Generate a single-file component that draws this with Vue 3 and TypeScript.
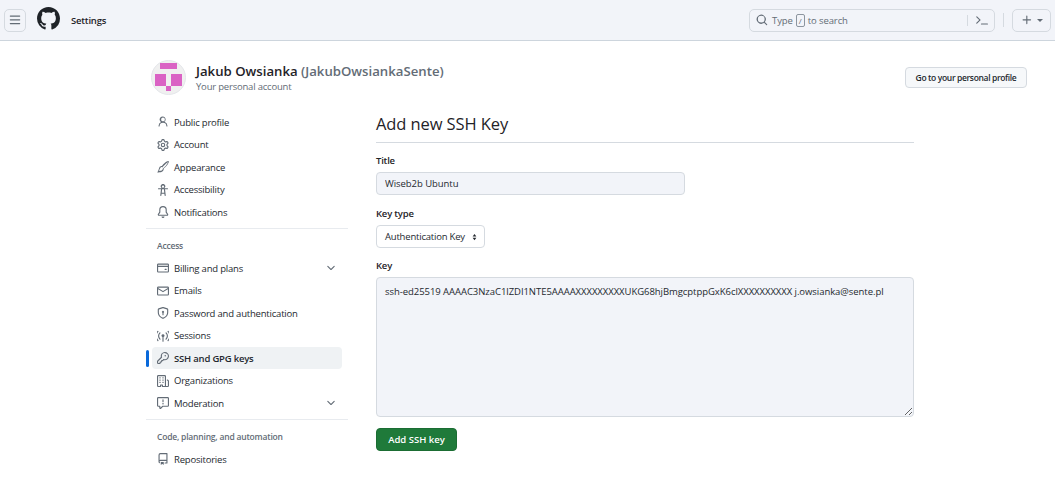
<template>
  <div class="page">
    <header class="topbar">
      <button type="button" class="icon-btn menu-btn" aria-label="Menu">
        <svg viewBox="0 0 16 16" class="icon"><path :d="icons.bars" /></svg>
      </button>
      <svg viewBox="0 0 16 16" class="logo"><path :d="icons.github" /></svg>
      <span class="context">Settings</span>
      <div class="search">
        <svg viewBox="0 0 16 16" class="icon search-icon"><path :d="icons.search" /></svg>
        <span>Type</span><kbd>/</kbd><span>to search</span>
        <span class="search-sep"></span>
        <svg viewBox="0 0 16 16" class="icon palette"><path :d="icons.palette" /></svg>
      </div>
      <span class="top-sep"></span>
      <button type="button" class="icon-btn plus-btn" aria-label="Create new">
        <svg viewBox="0 0 16 16" class="icon"><path :d="icons.plus" /></svg>
        <span class="caret"></span>
      </button>
    </header>

    <div class="content">
      <div class="account">
        <svg viewBox="0 0 35 35" class="avatar">
          <circle cx="17.5" cy="17.5" r="17" fill="#f0f0f0" stroke="#e4e6ea" />
          <rect x="9" y="3" width="17" height="6" fill="#da62c4" />
          <rect x="4" y="14" width="11" height="12" fill="#da62c4" />
          <rect x="20" y="14" width="11" height="12" fill="#da62c4" />
          <rect x="15" y="26" width="5" height="5" fill="#da62c4" />
        </svg>
        <div class="account-text">
          <div class="account-name">Jakub Owsianka <span>(JakubOwsiankaSente)</span></div>
          <div class="account-sub">Your personal account</div>
        </div>
        <button type="button" class="profile-btn">Go to your personal profile</button>
      </div>

      <div class="columns">
        <nav class="sidebar">
          <template v-for="group in nav" :key="group.title">
            <div v-if="group.title !== 'top'" class="nav-heading">{{ group.title }}</div>
            <a
              v-for="item in group.items"
              :key="item.label"
              class="nav-item"
              :class="{ 'nav-item--active': item.active }"
            >
              <svg viewBox="0 0 16 16" class="nav-icon"><path :d="item.icon" /></svg>
              <span class="nav-label">{{ item.label }}</span>
              <svg v-if="item.expand" viewBox="0 0 16 16" class="nav-chevron"><path :d="icons.chevron" /></svg>
            </a>
            <div v-if="group.divider" class="nav-divider"></div>
          </template>
        </nav>

        <main class="main">
          <h1>Add new SSH Key</h1>
          <label class="field-label">Title</label>
          <input class="title-input" type="text" value="Wiseb2b Ubuntu" />
          <label class="field-label">Key type</label>
          <div class="select">
            <span>Authentication Key</span>
            <svg viewBox="0 0 8 12" class="select-arrows"><path d="M4 1 7 5H1ZM4 11 1 7h6Z" /></svg>
          </div>
          <label class="field-label">Key</label>
          <textarea class="key-input">ssh-ed25519 AAAAC3NzaC1lZDI1NTE5AAAAXXXXXXXXXUKG68hjBmgcptppGxK6clXXXXXXXXXX j.owsianka@sente.pl</textarea>
          <button type="button" class="submit-btn">Add SSH key</button>
        </main>
      </div>
    </div>
  </div>
</template>

<script setup lang="ts">
const icons = {
  bars: 'M1 2.75A.75.75 0 0 1 1.75 2h12.5a.75.75 0 0 1 0 1.5H1.75A.75.75 0 0 1 1 2.75Zm0 5A.75.75 0 0 1 1.75 7h12.5a.75.75 0 0 1 0 1.5H1.75A.75.75 0 0 1 1 7.75ZM1.75 12h12.5a.75.75 0 0 1 0 1.5H1.75a.75.75 0 0 1 0-1.5Z',
  github: 'M8 0c4.42 0 8 3.58 8 8a8.013 8.013 0 0 1-5.45 7.59c-.4.08-.55-.17-.55-.38 0-.27.01-1.13.01-2.2 0-.75-.25-1.23-.54-1.48 1.78-.2 3.65-.88 3.65-3.95 0-.88-.31-1.59-.82-2.15.08-.2.36-1.02-.08-2.12 0 0-.67-.22-2.2.82-.64-.18-1.32-.27-2-.27-.68 0-1.36.09-2 .27-1.53-1.03-2.2-.82-2.2-.82-.44 1.1-.16 1.92-.08 2.12-.51.56-.82 1.28-.82 2.15 0 3.06 1.86 3.75 3.64 3.95-.23.2-.44.55-.51 1.07-.46.21-1.61.55-2.33-.66-.15-.24-.6-.83-1.23-.82-.67.01-.27.38.01.53.34.19.73.9.82 1.13.16.45.68 1.31 2.69.94 0 .67.01 1.3.01 1.49 0 .21-.15.45-.55.38A7.995 7.995 0 0 1 0 8c0-4.42 3.58-8 8-8Z',
  search: 'M10.68 11.74a6 6 0 0 1-7.922-8.982 6 6 0 0 1 8.982 7.922l3.04 3.04a.749.749 0 0 1-.326 1.275.749.749 0 0 1-.734-.215ZM11.5 7a4.499 4.499 0 1 0-8.997 0A4.499 4.499 0 0 0 11.5 7Z',
  palette: 'M6.354 8.04 1.581 12.813a.75.75 0 1 1-1.061-1.06L4.232 8.04.52 4.327a.75.75 0 1 1 1.06-1.06L6.354 8.04ZM7.25 12.5h8a.75.75 0 0 1 0 1.5h-8a.75.75 0 0 1 0-1.5Z',
  plus: 'M7.75 2a.75.75 0 0 1 .75.75V7h4.25a.75.75 0 0 1 0 1.5H8.5v4.25a.75.75 0 0 1-1.5 0V8.5H2.75a.75.75 0 0 1 0-1.5H7V2.75A.75.75 0 0 1 7.75 2Z',
  chevron: 'M12.78 5.22a.749.749 0 0 1 0 1.06l-4.25 4.25a.749.749 0 0 1-1.06 0L3.22 6.28a.749.749 0 1 1 1.06-1.06L8 8.939l3.72-3.719a.749.749 0 0 1 1.06 0Z',
  person: 'M10.561 8.073a6.005 6.005 0 0 1 3.432 5.142.75.75 0 1 1-1.498.07 4.5 4.5 0 0 0-8.99 0 .75.75 0 0 1-1.498-.07 6.004 6.004 0 0 1 3.431-5.142 3.999 3.999 0 1 1 4.123 0ZM10.5 4.5a2.5 2.5 0 1 0-5 0 2.5 2.5 0 0 0 5 0Z',
  gear: 'M8 0a8.2 8.2 0 0 1 .701.031C9.444.095 9.99.645 10.16 1.29l.288 1.107c.018.066.079.158.212.224.231.114.454.243.668.386.123.082.233.09.299.071l1.103-.303c.644-.176 1.392.021 1.82.63.27.385.506.792.704 1.218.315.675.111 1.422-.364 1.891l-.814.806c-.049.048-.098.147-.088.294.016.257.016.515 0 .772-.01.147.038.246.088.294l.814.806c.475.469.679 1.216.364 1.891a7.977 7.977 0 0 1-.704 1.217c-.428.61-1.176.807-1.82.63l-1.102-.302c-.067-.019-.177-.011-.3.071a5.909 5.909 0 0 1-.668.386c-.133.066-.194.158-.211.224l-.29 1.106c-.168.646-.715 1.196-1.458 1.26a8.006 8.006 0 0 1-1.402 0c-.743-.064-1.289-.614-1.458-1.26l-.289-1.106c-.018-.066-.079-.158-.212-.224a5.738 5.738 0 0 1-.668-.386c-.123-.082-.233-.09-.299-.071l-1.103.303c-.644.176-1.392-.021-1.82-.63a8.12 8.12 0 0 1-.704-1.218c-.315-.675-.111-1.422.363-1.891l.815-.806c.05-.048.098-.147.088-.294a6.214 6.214 0 0 1 0-.772c.01-.147-.038-.246-.088-.294l-.815-.806C.635 6.045.431 5.298.746 4.623a7.92 7.92 0 0 1 .704-1.217c.428-.61 1.176-.807 1.82-.63l1.102.302c.067.019.177.011.3-.071.214-.143.437-.272.668-.386.133-.066.194-.158.211-.224l.29-1.106C6.009.645 6.556.095 7.299.03 7.53.01 7.764 0 8 0Zm-.571 1.525c-.036.003-.108.036-.137.146l-.289 1.105c-.147.561-.549.967-.998 1.189-.173.086-.34.183-.5.29-.417.278-.97.423-1.529.27l-1.103-.303c-.109-.03-.175.016-.195.045-.22.312-.412.644-.573.99-.014.031-.021.11.059.19l.815.806c.411.406.562.957.53 1.456a4.709 4.709 0 0 0 0 .582c.032.499-.119 1.05-.53 1.456l-.815.806c-.081.08-.073.159-.059.19.162.346.353.677.573.989.02.03.085.076.195.046l1.102-.303c.56-.153 1.113-.008 1.53.27.161.107.328.204.501.29.447.222.85.629.997 1.189l.289 1.105c.029.109.101.143.137.146a6.6 6.6 0 0 0 1.142 0c.036-.003.108-.036.137-.146l.289-1.105c.147-.561.549-.967.998-1.189.173-.086.34-.183.5-.29.417-.278.97-.423 1.529-.27l1.103.303c.109.029.175-.016.195-.045.22-.313.411-.644.573-.99.014-.031.021-.11-.059-.19l-.815-.806c-.411-.406-.562-.957-.53-1.456a4.709 4.709 0 0 0 0-.582c-.032-.499.119-1.05.53-1.456l.815-.806c.081-.08.073-.159.059-.19a6.464 6.464 0 0 0-.573-.989c-.02-.03-.085-.076-.195-.046l-1.102.303c-.56.153-1.113.008-1.53-.27a4.44 4.44 0 0 0-.501-.29c-.447-.222-.85-.629-.997-1.189l-.289-1.105c-.029-.11-.101-.143-.137-.146a6.6 6.6 0 0 0-1.142 0ZM11 8a3 3 0 1 1-6 0 3 3 0 0 1 6 0ZM9.5 8a1.5 1.5 0 1 0-3.001.001A1.5 1.5 0 0 0 9.5 8Z',
  brush: 'M15.600 .400c-.800-.800-2.800.300-5 2C9 3.700 7.500 5.200 6.500 6.500 5 6.500 3.700 7.200 3.100 8.500 2.400 10 2.400 12 .300 15.200c3.300.200 5.900-.200 7.300-1.500 1-.9 1.500-2.200 1.300-3.600 1.300-.9 2.700-2.300 3.900-3.800 1.900-2.300 3.500-5.200 2.800-5.900Zm-1 1c.100.800-1.100 2.900-2.800 5-1.100 1.300-2.300 2.500-3.400 3.200L7.200 8.400c.8-1.100 2-2.400 3.300-3.500 1.700-1.500 3.500-2.800 4.100-3.500ZM4.400 9.200c.5-.9 1.400-1.300 2.300-1.200l1.200 1.200c.2 1-.1 2-.9 2.700-.9.800-2.500 1.200-4.500 1.200 1-1.600 1.300-2.900 1.900-3.900Z',
  access: 'M9.923 5.302c.063.063.122.129.178.198H14A.75.75 0 0 1 14 7h-3.3l.578 5.163.362 2.997a.75.75 0 0 1-1.49.18L9.868 13H6.132l-.282 2.34a.75.75 0 0 1-1.49-.18l.362-2.997L5.3 7H2a.75.75 0 0 1 0-1.5h3.9a2.54 2.54 0 0 1 .176-.198 3 3 0 1 1 3.847 0ZM9.2 7.073h-2.4l-.479 4.427h3.358ZM8 5a1.5 1.5 0 1 0 0-3 1.5 1.5 0 0 0 0 3Z',
  bell: 'M8 16a2 2 0 0 0 1.985-1.75c.017-.137-.097-.25-.235-.25h-3.5c-.138 0-.252.113-.235.25A2 2 0 0 0 8 16ZM3 5a5 5 0 0 1 10 0v2.947c0 .05.015.098.042.139l1.703 2.555A1.519 1.519 0 0 1 13.482 13H2.518a1.516 1.516 0 0 1-1.263-2.36l1.703-2.554A.255.255 0 0 0 3 7.947Zm5-3.5A3.5 3.5 0 0 0 4.5 5v2.947c0 .346-.102.683-.294.97l-1.703 2.556a.017.017 0 0 0-.003.01l.001.006c0 .002.002.004.004.006l.006.004.007.001h10.964l.007-.001.006-.004.004-.006.001-.007a.017.017 0 0 0-.003-.01l-1.703-2.554a1.745 1.745 0 0 1-.294-.97V5A3.5 3.5 0 0 0 8 1.5Z',
  card: 'M10.75 9a.75.75 0 0 0 0 1.5h1.5a.75.75 0 0 0 0-1.5h-1.5ZM0 3.75C0 2.784.784 2 1.75 2h12.5c.966 0 1.75.784 1.75 1.750v8.500A1.750 1.750 0 0 1 14.250 14H1.750A1.750 1.750 0 0 1 0 12.250ZM14.500 6.500h-13v5.750c0 .138.112.25.25.25h12.500a.25.25 0 0 0 .25-.25Zm0-2.750a.25.25 0 0 0-.25-.25H1.750a.25.25 0 0 0-.25.25V5h13Z',
  mail: 'M1.75 2h12.5c.966 0 1.75.784 1.75 1.75v8.5A1.75 1.75 0 0 1 14.25 14H1.75A1.75 1.75 0 0 1 0 12.25v-8.5C0 2.784.784 2 1.75 2ZM1.5 12.251c0 .138.112.25.25.25h12.5a.25.25 0 0 0 .25-.25V5.809L8.38 9.397a.75.75 0 0 1-.76 0L1.5 5.809v6.442Zm13-8.181v-.32a.25.25 0 0 0-.25-.25H1.75a.25.25 0 0 0-.25.25v.32L8 7.88Z',
  shield: 'm8.533.133 5.25 1.68A1.75 1.75 0 0 1 15 3.48V7c0 1.566-.32 3.182-1.303 4.682-.983 1.498-2.585 2.813-5.032 3.855a1.697 1.697 0 0 1-1.33 0c-2.447-1.042-4.049-2.357-5.032-3.855C1.32 10.182 1 8.566 1 7V3.48a1.75 1.75 0 0 1 1.217-1.667l5.25-1.68a1.748 1.748 0 0 1 1.066 0Zm-.61 1.429.001.001-5.25 1.68a.251.251 0 0 0-.174.237V7c0 1.36.275 2.666 1.057 3.859.784 1.194 2.121 2.342 4.366 3.298a.196.196 0 0 0 .154 0c2.245-.957 3.582-2.103 4.366-3.297C13.225 9.666 13.5 8.358 13.5 7V3.48a.25.25 0 0 0-.174-.238l-5.25-1.68a.25.25 0 0 0-.153 0ZM9.5 6.5c0 .536-.286 1.032-.75 1.3v2.45a.75.75 0 0 1-1.5 0V7.8A1.5 1.5 0 1 1 9.5 6.5Z',
  broadcast: 'M8 5.500a2 2 0 0 1 .75 3.855V15a.75.75 0 0 1-1.5 0V9.355A2 2 0 0 1 8 5.500ZM4.400 3.300a.75.75 0 0 1 .1 1.050 5.500 5.500 0 0 0 0 7.300.75.75 0 1 1-1.150.950 7 7 0 0 1 0-9.200.75.75 0 0 1 1.050-.100Zm7.200 0a.75.75 0 0 1 1.050.100 7 7 0 0 1 0 9.200.75.75 0 1 1-1.150-.950 5.500 5.500 0 0 0 0-7.300.75.75 0 0 1 .1-1.050ZM1.700 1.300a.75.75 0 0 1 .1 1.050 8.800 8.800 0 0 0 0 11.300.75.75 0 1 1-1.150.950 10.300 10.300 0 0 1 0-13.200.75.75 0 0 1 1.050-.100Zm12.600 0a.75.75 0 0 1 1.050.100 10.300 10.300 0 0 1 0 13.200.75.75 0 1 1-1.150-.950 8.800 8.800 0 0 0 0-11.300.75.75 0 0 1 .1-1.050Z',
  key: 'M10.5 0a5.499 5.499 0 1 1-1.288 10.848l-.932.932a.749.749 0 0 1-.53.22H7v.75a.749.749 0 0 1-.22.53l-.5.5a.749.749 0 0 1-.53.22H5v.75a.749.749 0 0 1-.22.53l-.5.5a.749.749 0 0 1-.53.22h-2A1.75 1.75 0 0 1 0 14.25v-2c0-.199.079-.389.22-.53l4.932-4.932A5.5 5.5 0 0 1 10.5 0Zm-4 5.5c-.001.431.069.86.205 1.269a.75.75 0 0 1-.181.768L1.5 12.56v1.69c0 .138.112.25.25.25h1.69l.06-.06v-1.19a.75.75 0 0 1 .75-.75h1.19l.06-.06v-1.19a.75.75 0 0 1 .75-.75h1.19l1.023-1.025a.75.75 0 0 1 .768-.18A4 4 0 1 0 6.5 5.5ZM11 6a1 1 0 1 1 0-2 1 1 0 0 1 0 2Z',
  org: 'M1.75 16A1.75 1.75 0 0 1 0 14.25V1.75C0 .784.784 0 1.75 0h8.5C11.216 0 12 .784 12 1.75v12.5c0 .085-.006.168-.018.25h2.268a.25.25 0 0 0 .25-.25V8.285a.25.25 0 0 0-.111-.208l-1.055-.703a.749.749 0 1 1 .832-1.248l1.055.703c.487.325.779.871.779 1.456v5.965A1.75 1.75 0 0 1 14.25 16h-3.5a.766.766 0 0 1-.197-.026c-.099.017-.2.026-.303.026h-3a.75.75 0 0 1-.75-.75V14h-1v1.25a.75.75 0 0 1-.75.75Zm-.25-1.75c0 .138.112.25.25.25H4v-1.25a.75.75 0 0 1 .75-.75h2.5a.75.75 0 0 1 .75.75v1.25h2.25a.25.25 0 0 0 .25-.25V1.75a.25.25 0 0 0-.25-.25h-8.5a.25.25 0 0 0-.25.25ZM3.75 6h.5a.75.75 0 0 1 0 1.5h-.5a.75.75 0 0 1 0-1.5ZM3 3.75A.75.75 0 0 1 3.75 3h.5a.75.75 0 0 1 0 1.5h-.5A.75.75 0 0 1 3 3.75Zm4 3A.75.75 0 0 1 7.75 6h.5a.75.75 0 0 1 0 1.5h-.5A.75.75 0 0 1 7 6.75ZM7.75 3h.5a.75.75 0 0 1 0 1.5h-.5a.75.75 0 0 1 0-1.5ZM3 9.75A.75.75 0 0 1 3.75 9h.5a.75.75 0 0 1 0 1.5h-.5A.75.75 0 0 1 3 9.75ZM7.75 9h.5a.75.75 0 0 1 0 1.5h-.5a.75.75 0 0 1 0-1.5Z',
  report: 'M0 1.75C0 .784.784 0 1.75 0h12.5C15.216 0 16 .784 16 1.75v9.5A1.75 1.75 0 0 1 14.25 13H8.06l-2.573 2.573A1.458 1.458 0 0 1 3 14.543V13H1.75A1.75 1.75 0 0 1 0 11.25Zm1.75-.25a.25.25 0 0 0-.25.25v9.5c0 .138.112.25.25.25h2a.75.75 0 0 1 .75.75v2.19l2.72-2.72a.749.749 0 0 1 .53-.22h6.5a.25.25 0 0 0 .25-.25v-9.5a.25.25 0 0 0-.25-.25Zm7 2.25v2.5a.75.75 0 0 1-1.5 0v-2.5a.75.75 0 0 1 1.5 0ZM9 9a1 1 0 1 1-2 0 1 1 0 0 1 2 0Z',
  repo: 'M2 2.5A2.5 2.5 0 0 1 4.5 0h8.75a.75.75 0 0 1 .75.75v12.5a.75.75 0 0 1-.75.75h-2.5a.75.75 0 0 1 0-1.5h1.75v-2h-8a1 1 0 0 0-.714 1.7.75.75 0 1 1-1.072 1.05A2.495 2.495 0 0 1 2 11.5Zm10.5-1h-8a1 1 0 0 0-1 1v6.708A2.486 2.486 0 0 1 4.5 9h8ZM5 12.25a.25.25 0 0 1 .25-.25h3.5a.25.25 0 0 1 .25.25v3.25a.25.25 0 0 1-.4.2l-1.45-1.087a.249.249 0 0 0-.3 0L5.4 15.7a.25.25 0 0 1-.4-.2Z',
}

interface NavItem {
  label: string
  icon: string
  expand?: boolean
  active?: boolean
}

const nav: { title: string; divider?: boolean; items: NavItem[] }[] = [
  {
    title: 'top',
    divider: true,
    items: [
      { label: 'Public profile', icon: icons.person },
      { label: 'Account', icon: icons.gear },
      { label: 'Appearance', icon: icons.brush },
      { label: 'Accessibility', icon: icons.access },
      { label: 'Notifications', icon: icons.bell },
    ],
  },
  {
    title: 'Access',
    divider: true,
    items: [
      { label: 'Billing and plans', icon: icons.card, expand: true },
      { label: 'Emails', icon: icons.mail },
      { label: 'Password and authentication', icon: icons.shield },
      { label: 'Sessions', icon: icons.broadcast },
      { label: 'SSH and GPG keys', icon: icons.key, active: true },
      { label: 'Organizations', icon: icons.org },
      { label: 'Moderation', icon: icons.report, expand: true },
    ],
  },
  {
    title: 'Code, planning, and automation',
    items: [{ label: 'Repositories', icon: icons.repo }],
  },
]
</script>

<style>
html,
body {
  margin: 0;
  background: #fff;
  overflow: hidden;
}
</style>

<style scoped>
.page {
  height: 499px;
  overflow: hidden;
  font-family: "Open Sans", "Noto Sans", sans-serif;
  font-size: 9.5px;
  letter-spacing: -0.2px;
  color: #24292f;
}

.topbar {
  height: 40px;
  display: flex;
  align-items: center;
  padding: 0 4px;
  background: #f2f4f9;
  border-bottom: 1px solid #cdd5dd;
}

.icon {
  width: 12px;
  height: 12px;
  fill: #636c76;
  flex: none;
}

.icon-btn {
  height: 23px;
  display: flex;
  align-items: center;
  justify-content: center;
  padding: 0;
  background: transparent;
  border: 1px solid #d5dae0;
  border-radius: 5px;
}

.menu-btn {
  width: 22px;
}

.logo {
  width: 23px;
  height: 23px;
  margin-left: 11px;
  margin-top: -3px;
  fill: #1f2328;
}

.context {
  margin-left: 11px;
  font-size: 9.5px;
  font-weight: 600;
  color: #1f2328;
}

.search {
  margin-left: auto;
  width: 246px;
  height: 23px;
  box-sizing: border-box;
  display: flex;
  align-items: center;
  gap: 3px;
  padding: 0 4px 0 6px;
  border: 1px solid #d5dae0;
  border-radius: 5px;
  color: #636c76;
  font-size: 9.5px;
  letter-spacing: -0.1px;
}

.search-icon {
  margin-right: 1px;
}

.search kbd {
  width: 7px;
  height: 11px;
  display: flex;
  align-items: center;
  justify-content: center;
  border: 1px solid #8c959f;
  border-radius: 2px;
  font-family: inherit;
  font-size: 8px;
}

.search-sep {
  width: 1px;
  height: 11px;
  margin: 0 5px 0 auto;
  background: #d5dae0;
}

.palette {
  margin-right: 2px;
}

.top-sep {
  width: 1px;
  height: 14px;
  margin: 0 8px;
  background: #d5dae0;
}

.plus-btn {
  width: 39px;
  gap: 4px;
}

.caret {
  width: 0;
  height: 0;
  border: 3px solid transparent;
  border-top-color: #636c76;
  border-bottom-width: 0;
}

.content {
  padding: 19px 28px 0 146px;
}

.account {
  display: flex;
  align-items: center;
  padding-left: 5px;
}

.avatar {
  width: 35px;
  height: 35px;
  flex: none;
}

.account-text {
  margin-left: 10px;
}

.account-name {
  font-size: 13.2px;
  line-height: 18px;
  font-weight: 600;
  letter-spacing: 0;
  color: #1f2328;
}

.account-name span {
  color: #636c76;
}

.account-sub {
  font-size: 9.5px;
  line-height: 13px;
  color: #636c76;
}

.profile-btn {
  margin-left: auto;
  margin-top: -1px;
  height: 21px;
  width: 122px;
  padding: 0;
  background: #f6f8fa;
  border: 1px solid #d5dae0;
  border-radius: 4px;
  font-family: inherit;
  font-size: 8.5px;
  letter-spacing: -0.35px;
  font-weight: 600;
  color: #24292f;
}

.columns {
  display: flex;
  margin-top: 16px;
}

.sidebar {
  width: 202px;
  flex: none;
}

.nav-item {
  position: relative;
  width: 190px;
  height: 22px;
  margin: 0 0 .5px 6px;
  display: flex;
  align-items: center;
  padding: 0 5px;
  box-sizing: border-box;
  border-radius: 4px;
  color: #24292f;
}

.nav-item--active {
  background: #eff2f4;
  font-weight: 600;
}

.nav-item--active::before {
  content: "";
  position: absolute;
  left: -6px;
  top: 3px;
  bottom: 2px;
  width: 3px;
  border-radius: 2px;
  background: #0969da;
}

.nav-icon {
  width: 12px;
  height: 12px;
  margin-right: 5px;
  fill: #636c76;
  flex: none;
}

.nav-label {
  flex: 1;
  white-space: nowrap;
}

.nav-chevron {
  width: 12px;
  height: 12px;
  fill: #636c76;
}

.nav-divider {
  height: 1px;
  margin: 5px 0 7px;
  background: #e8ebef;
}

.nav-heading {
  height: 21px;
  padding: 4px 0 0 11px;
  box-sizing: border-box;
  font-size: 8.5px;
  line-height: 12px;
  font-weight: 600;
  color: #636c76;
}

.main {
  width: 538px;
  margin-left: 28px;
  display: flex;
  flex-direction: column;
  align-items: flex-start;
}

.main h1 {
  width: 100%;
  margin: 0 0 11px;
  padding-bottom: 6px;
  font-size: 16.5px;
  line-height: 25px;
  font-weight: 400;
  letter-spacing: -0.1px;
  color: #1f2328;
  border-bottom: 1px solid #d5dae0;
}

.field-label {
  font-size: 9.5px;
  line-height: 13px;
  font-weight: 600;
  color: #1f2328;
  margin-bottom: 5px;
}

.title-input,
.key-input {
  box-sizing: border-box;
  padding: 0 8px;
  background: #f2f4f9;
  border: 1px solid #d5dae0;
  border-radius: 4px;
  font-family: inherit;
  font-size: 9.5px;
  letter-spacing: -0.05px;
  color: #24292f;
  outline: none;
}

.title-input {
  width: 309px;
  height: 23px;
  margin-bottom: 12px;
}

.select {
  width: 109px;
  height: 23px;
  box-sizing: border-box;
  display: flex;
  align-items: center;
  justify-content: space-between;
  padding: 0 7px 0 8px;
  margin-bottom: 11px;
  border: 1px solid #d5dae0;
  border-radius: 4px;
  background: #fff;
  white-space: nowrap;
}

.select-arrows {
  width: 5px;
  height: 8px;
  fill: #24292f;
}

.key-input {
  width: 538px;
  height: 140px;
  padding: 7px 8px;
  margin-bottom: 11px;
  resize: vertical;
  line-height: 14px;
}

.submit-btn {
  width: 81px;
  height: 23px;
  padding: 0;
  background: #1f7a3a;
  border: 1px solid #1b6d33;
  border-radius: 4px;
  font-family: inherit;
  font-size: 9.5px;
  font-weight: 600;
  color: #fff;
}
</style>
